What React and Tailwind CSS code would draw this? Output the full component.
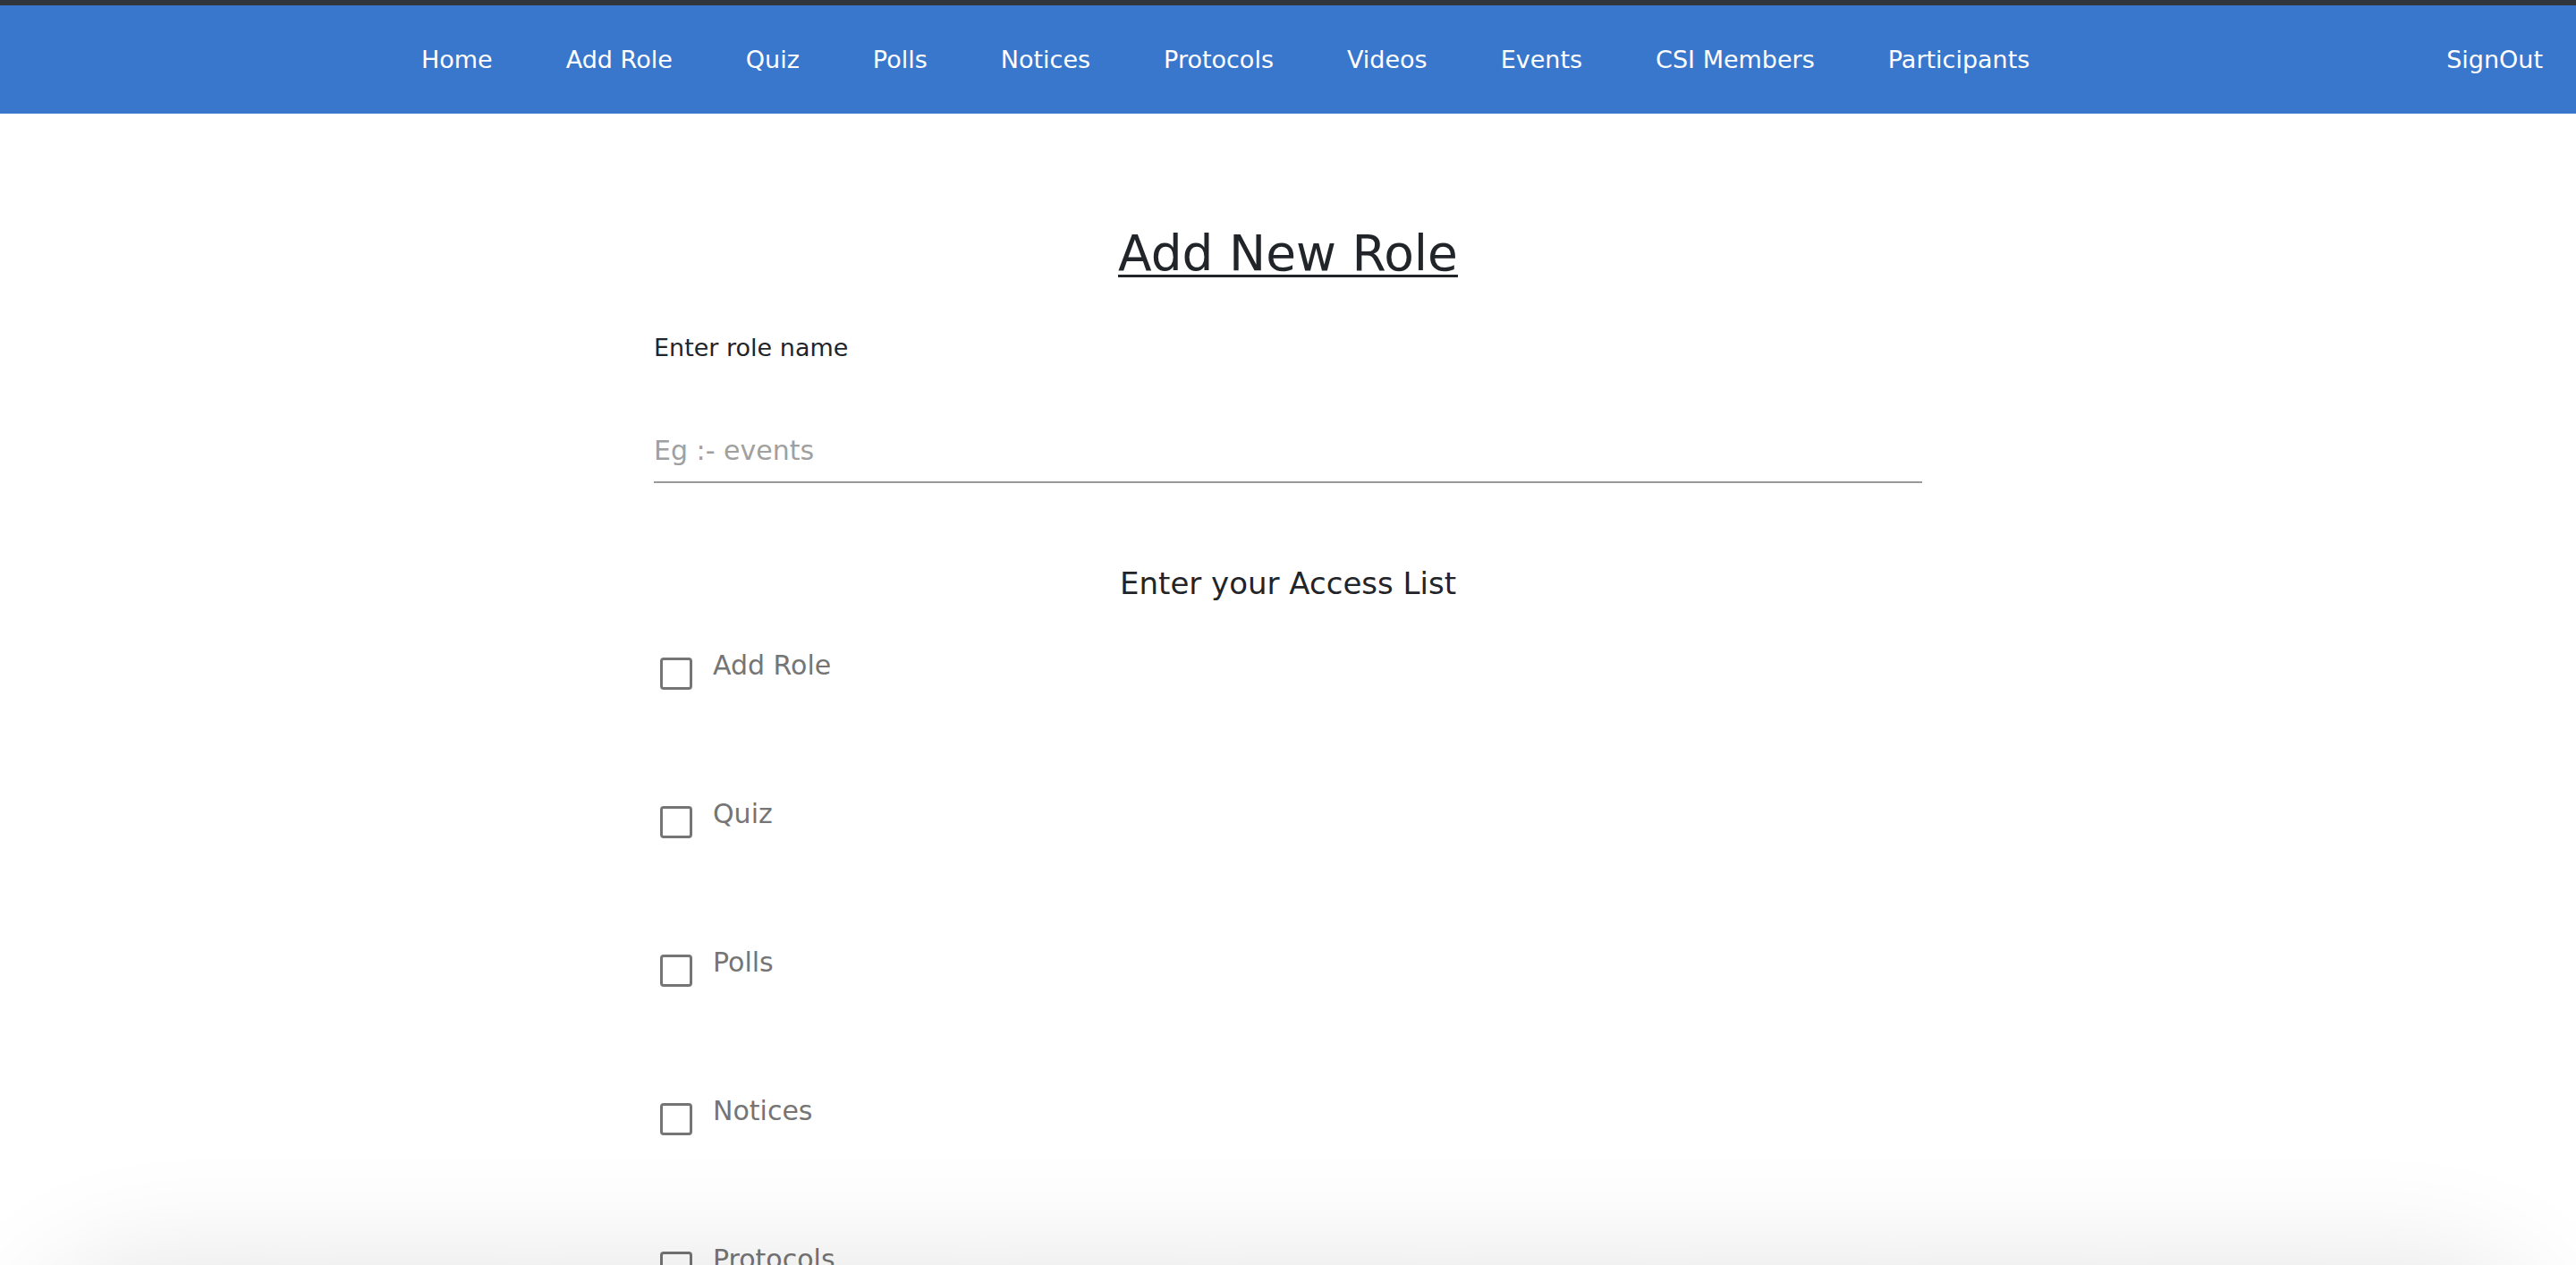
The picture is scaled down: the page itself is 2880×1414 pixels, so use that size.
import { useState } from 'react';

const navLinks = ['Home', 'Add Role', 'Quiz', 'Polls', 'Notices', 'Protocols', 'Videos', 'Events', 'CSI Members', 'Participants'];

const accessItems = ['Add Role', 'Quiz', 'Polls', 'Notices', 'Protocols', 'Videos', 'Events', 'CSI Members', 'Participants'];

function Navbar() {
  return (
    <header className="bg-[#3877cc] border-t-[6px] border-[#313438]">
      <nav className="h-[121px] flex items-center pl-[471px] pr-[37px] text-white text-[27px] leading-none">
        <ul className="flex items-center gap-[82px]">
          {navLinks.map(link => (
            <li key={link}>
              <a href="#" className="whitespace-nowrap">{link}</a>
            </li>
          ))}
        </ul>
        <a href="#" className="ml-auto whitespace-nowrap">SignOut</a>
      </nav>
    </header>
  );
}

export default function App() {
  const [roleName, setRoleName] = useState('');
  const [access, setAccess] = useState({});

  const toggle = (item) => setAccess(prev => ({ ...prev, [item]: !prev[item] }));

  return (
    <div className="h-[1414px] overflow-hidden bg-white font-['DejaVu_Sans',sans-serif]">
      <Navbar />

      <main className="w-[1418px] mx-auto">
        {/* Title */}
        <h2 className="mt-[129px] text-center text-[55px] leading-none text-[#212529] underline decoration-[3px] underline-offset-[5px]">
          Add New Role
        </h2>

        {/* Role name */}
        <label className="block mt-[64px] text-[27px] leading-none text-[#212529]">Enter role name</label>
        <input
          type="text"
          value={roleName}
          onChange={e => setRoleName(e.target.value)}
          placeholder="Eg :- events"
          className="block w-full mt-[71px] h-[67px] pb-[4px] text-[30px] text-[#212529] border-b-2 border-[#999999] outline-none placeholder:text-[#a0a0a0]"
        />

        {/* Access list */}
        <h4 className="mt-[95px] text-center text-[34px] leading-none text-[#212529]">Enter your Access List</h4>

        <ul className="mt-[60px]">
          {accessItems.map(item => (
            <li key={item} className="flex items-start h-[166px]">
              <input
                type="checkbox"
                checked={!!access[item]}
                onChange={() => toggle(item)}
                className="appearance-none shrink-0 ml-[7px] mt-[6px] w-[36px] h-[36px] rounded-[4px] border-[3px] border-[#757575] checked:bg-[#3877cc] checked:border-[#3877cc]"
              />
              <span className="ml-[23px] text-[30px] leading-none text-[#757575]">{item}</span>
            </li>
          ))}
        </ul>
      </main>

      {/* shadow of the panel sitting just below the fold */}
      <div className="fixed left-[80px] right-[80px] top-[1460px] h-[300px] rounded-[80px] shadow-[0_0_140px_40px_rgba(0,0,0,0.12)] pointer-events-none z-10" />
    </div>
  );
}
